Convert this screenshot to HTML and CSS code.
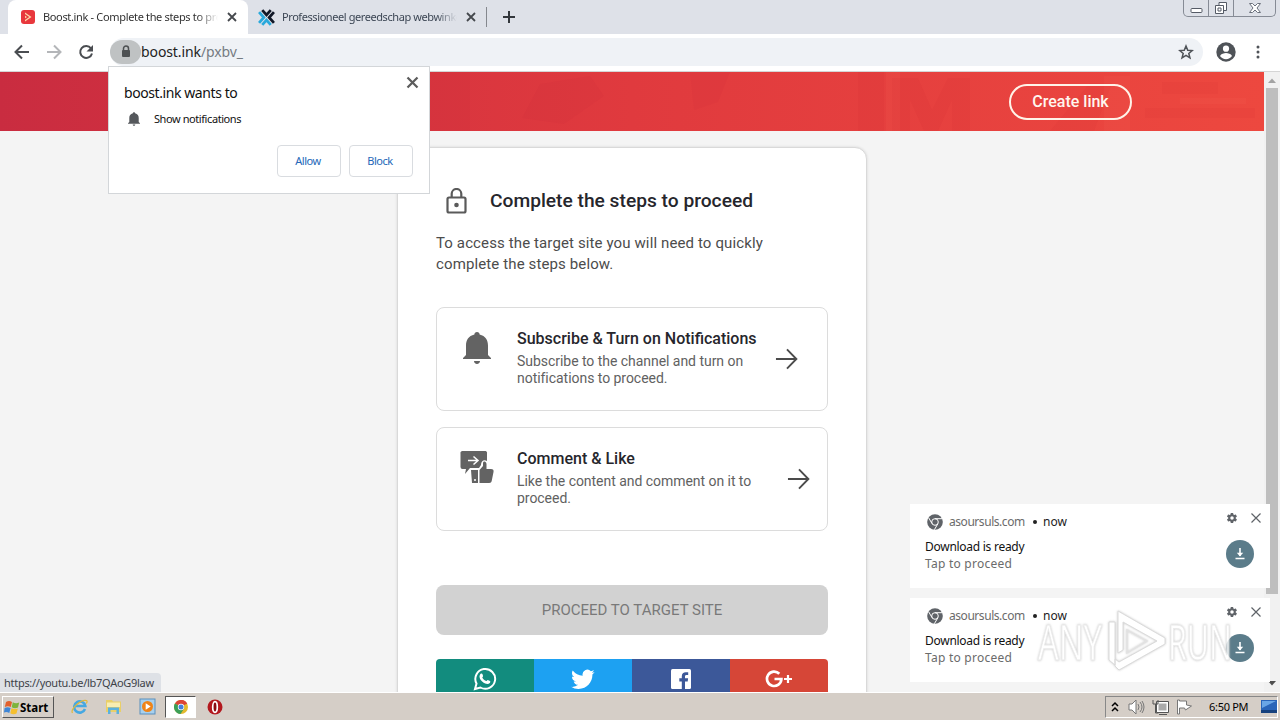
FILE: index.html
```html
<!DOCTYPE html>
<html lang="en">
<head>
    <meta charset="UTF-8">
    <meta name="viewport" content="width=device-width, initial-scale=1.0">
    <title>Boost.ink - Complete the steps to proceed</title>
    <link rel="stylesheet" href="styles.css">
</head>
<body>
    <!-- shared shapes -->
    <svg class="defs" width="0" height="0">
        <symbol id="close" viewBox="0 0 12 12"><path d="M2 2l8 8M10 2l-8 8" fill="none" stroke="currentColor" stroke-width="1.8"/></symbol>
        <symbol id="close-thin" viewBox="0 0 12 12"><path d="M1.500 1.500l9 9M10.500 1.500l-9 9" fill="none" stroke="currentColor" stroke-width="1.200"/></symbol>
        <symbol id="arrow" viewBox="0 0 24 24"><path d="M1 12h21M12.500 2l9.800 10-9.800 10" fill="none" stroke="currentColor" stroke-width="2"/></symbol>
        <symbol id="bell" viewBox="0 0 28 32"><path d="M14 0c1.600 0 2.600 1.100 2.600 2.600C22.500 4 25 8.400 25 13.500V23l3 3v1H0v-1l3-3v-9.500C3 8.400 5.500 4 11.400 2.600 11.400 1.100 12.400 0 14 0zM11 29h6c0 1.600-1.300 3-3 3s-3-1.400-3-3z" fill="currentColor"/></symbol>
        <symbol id="chrome-gray" viewBox="0 0 16 16"><circle cx="8" cy="8" r="7.800" fill="#5f6368"/><circle cx="8" cy="8" r="3.300" fill="none" stroke="#fff" stroke-width="1"/><path d="M8 4.700h7M5.100 9.700L1.700 3.900M10.900 9.700l-3.500 6" stroke="#fff" stroke-width="1"/></symbol>
        <symbol id="gear" viewBox="0 0 24 24"><path fill="#5f6368" fill-rule="evenodd" d="M19.400 13a7.800 7.800 0 0 0 0-2l2.100-1.700a.5.5 0 0 0 .1-.6l-2-3.500a.5.5 0 0 0-.6-.2l-2.500 1a7.500 7.500 0 0 0-1.700-1l-.4-2.600a.5.500 0 0 0-.5-.4h-4a.5.500 0 0 0-.5.4L9 5a7.500 7.500 0 0 0-1.700 1l-2.500-1a.5.500 0 0 0-.6.200l-2 3.500a.5.500 0 0 0 .1.600L4.500 11a7.800 7.800 0 0 0 0 2l-2.200 1.700a.5.500 0 0 0-.1.600l2 3.500c.1.200.4.300.6.200l2.500-1a7.500 7.500 0 0 0 1.700 1l.4 2.600c0 .2.200.4.500.4h4c.3 0 .5-.2.500-.4l.4-2.600a7.500 7.500 0 0 0 1.700-1l2.500 1c.2.100.5 0 .6-.2l2-3.500a.5.500 0 0 0-.1-.6zM12 15.500a3.500 3.500 0 1 1 0-7 3.500 3.500 0 0 1 0 7z"/></symbol>
        <symbol id="download" viewBox="0 0 28 28"><circle cx="14" cy="14" r="14" fill="#5b7c8a"/><path d="M14 8v8M9.500 18.500h9" stroke="#fff" stroke-width="1.600"/><path d="M10.800 12.800h6.400L14 16.500z" fill="#fff"/></symbol>
    </svg>

    <div class="tabs">
        <div class="tab active">
            <svg class="favicon" viewBox="0 0 14 14"><rect width="14" height="14" rx="3" fill="#e8383d"/><path d="M4 2.500L10.500 7 4 11.500z" fill="#fbd9a8"/><path d="M3.500 4.500L7 7 3.500 9.500" fill="none" stroke="#e8383d" stroke-width="1.500"/></svg>
            <span class="tab-title">Boost.ink - Complete the steps to proceed</span>
            <svg class="tab-close"><use href="#close"/></svg>
        </div>
        <div class="tab">
            <svg class="favicon big" viewBox="0 0 16 16"><path d="M4 1l4 4.500L12 1M15 3l-4.500 5 4.500 5" fill="none" stroke="#111827" stroke-width="2.600"/><path d="M1 3l4.500 5L1 13M4 15l4-4.500 4 4.500" fill="none" stroke="#29a9dc" stroke-width="2.600"/></svg>
            <span class="tab-title">Professioneel gereedschap webwinkel</span>
            <svg class="tab-close"><use href="#close"/></svg>
        </div>
        <span class="tab-line"></span>
        <svg class="new-tab" viewBox="0 0 12 12"><path d="M6 0v12M0 6h12" stroke="#33373c" stroke-width="2"/></svg>
        <div class="window-buttons">
            <span><svg width="14" height="17"><rect x="2" y="8.500" width="11" height="4" rx="1" fill="#fff" stroke="#555b66"/></svg></span>
            <span><svg width="14" height="17"><path d="M5 5V2.500h7.500v8H10M1.500 5.500H9.500v8h-8zM4 8h3v3H4z" fill="#fff" stroke="#555b66"/></svg></span>
            <span class="wide"><svg width="14" height="17"><path d="M1.500 3.500h3L7 6l2.500-2.500h3L9 8l3.500 4.500h-3L7 10l-2.500 2.500h-3L5 8z" fill="#fff" stroke="#6b717c"/></svg></span>
        </div>
    </div>

    <div class="toolbar">
        <svg class="nav" viewBox="0 0 16 16"><path d="M15 8H2M8 1.500L1.500 8 8 14.500" fill="none" stroke="#4a4d51" stroke-width="2"/></svg>
        <svg class="nav" viewBox="0 0 16 16"><path d="M1 8h13M8 1.500L14.500 8 8 14.500" fill="none" stroke="#b4b6b9" stroke-width="2"/></svg>
        <svg class="nav" viewBox="0 0 16 16"><path d="M13 4.300A6 6 0 1 0 14 9.500" fill="none" stroke="#4a4d51" stroke-width="2"/><path d="M15 1v6.500H8.500z" fill="#4a4d51"/></svg>
        <div class="omnibox">
            <span class="lock-pill"><svg width="10" height="13" viewBox="0 0 10 13"><path d="M2.500 6V3.500a2.500 2.500 0 0 1 5 0V6" fill="none" stroke="#4d5052" stroke-width="1.500"/><rect x="1" y="5" width="8" height="7" rx="1" fill="#4d5052"/></svg></span>
            <span class="url">boost.ink<i>/pxbv_</i></span>
            <svg class="star" viewBox="0 0 24 24"><path d="M12 3l2.600 6.300 6.800.5-5.200 4.400 1.700 6.600-5.900-3.600-5.900 3.600 1.700-6.600-5.200-4.400 6.800-.5z" fill="none" stroke="#4f5358" stroke-width="2.300"/></svg>
        </div>
        <svg class="avatar" viewBox="0 0 20 20"><circle cx="10" cy="10" r="9.700" fill="#4f5358"/><circle cx="10" cy="6.700" r="3.100" fill="#fff"/><path d="M4 14c1-2.300 4-3 6-3s5 .7 6 3c-1.300 2-3.500 3.200-6 3.200S5.300 16 4 14z" fill="#fff"/></svg>
        <svg class="dots" viewBox="0 0 4 14"><circle cx="2" cy="2" r="1.500"/><circle cx="2" cy="7" r="1.500"/><circle cx="2" cy="12" r="1.500"/></svg>
    </div>

    <div class="viewport">
        <div class="page">
            <header>
                <svg class="pattern" width="1264" height="59">
                    <path d="M690 0h40l-12 30-24 8zM540 12l50-8 14 20-40 28-42-6zM430 0h40v59h-40z" fill="#b81c34" opacity=".05"/>
                    <path d="M858 0h26v59h-26zM892 59V6h26l14 32 16-32h22v53h-18V28l-14 31h-14l-14-31v31zM1050 59l40-48 22 0-18 48zM1162 10h56v12h-56zM1145 36h110v10h-110z" fill="#c5202c" opacity=".07"/>
                    <path d="M886 0h14v59h-14zM1104 4h26v55h-26zM1180 26h66v6h-66z" fill="#ff7a63" opacity=".08"/>
                </svg>
                <button class="create">Create link</button>
            </header>
            <main class="card">
                <div class="heading">
                    <svg width="21" height="26" viewBox="0 0 21 26"><rect x="1.500" y="9.500" width="18" height="15" rx="1.500" fill="none" stroke="#5a5a5a" stroke-width="2.200"/><path d="M5.700 9V5.800a4.800 4.800 0 0 1 9.600 0V9" fill="none" stroke="#5a5a5a" stroke-width="2.200"/><circle cx="10.500" cy="17" r="2.300" fill="#5a5a5a"/></svg>
                    <h1>Complete the steps to proceed</h1>
                </div>
                <p class="intro">To access the target site you will need to quickly<br>complete the steps below.</p>
                <div class="step">
                    <svg class="step-icon" width="28" height="32"><use href="#bell"/></svg>
                    <div class="step-text">
                        <h2>Subscribe &amp; Turn on Notifications</h2>
                        <p>Subscribe to the channel and turn on<br>notifications to proceed.</p>
                    </div>
                    <svg class="arrow"><use href="#arrow"/></svg>
                </div>
                <div class="step comment">
                    <svg class="step-icon" width="34" height="33" viewBox="0 0 34 33">
                        <path d="M2.500 0h22A2 2 0 0 1 27 2.500V10c-3-2-6 0-6 4l-2 3h-9l-5 6 1-5H2.500A2 2 0 0 1 .5 16V2.500A2 2 0 0 1 2.500 0z" fill="#636363"/>
                        <path d="M8 9.500h9M13.500 5.500l4.500 4-4.500 4" fill="none" stroke="#fff" stroke-width="1.500"/>
                        <path d="M11 19h7v13h-6zM19.500 19l3.500-4v-3c0-2.500 3.500-2 3.500 1v5H31c2 0 3 1 2.500 3l-1.800 9c-.3 1.300-1 2-2.500 2h-9.700z" fill="#636363"/>
                        <circle cx="15" cy="29" r="1" fill="#fff"/>
                    </svg>
                    <div class="step-text">
                        <h2>Comment &amp; Like</h2>
                        <p>Like the content and comment on it to<br>proceed.</p>
                    </div>
                    <svg class="arrow"><use href="#arrow"/></svg>
                </div>
                <button class="proceed">PROCEED TO TARGET SITE</button>
                <div class="share">
                    <span class="whatsapp"><svg width="24" height="24" viewBox="0 0 24 24"><path d="M2 22l1.500-5.500A9.900 9.900 0 1 1 7.400 20.500z" fill="none" stroke="#fff" stroke-width="2"/><path d="M8 6.500c.7-.3 1.200 0 1.400.6l.7 1.800c.1.500-.8 1.200-.8 1.500.8 1.700 2.300 3 4 3.700.4.100 1-1.200 1.500-1.100l2.200 1c.5.300.3 1.500-.2 2.100-1.700 1.900-4.800.7-6.500-.5C8.300 14.100 6.700 12.200 6.500 9.800c0-1.300.7-2.900 1.500-3.300z" fill="#fff"/></svg></span>
                    <span class="twitter"><svg width="24" height="24" viewBox="0 0 24 24"><path fill="#fff" d="M23.600 5a9.600 9.600 0 0 1-2.800.8 4.800 4.800 0 0 0 2.100-2.700 9.700 9.700 0 0 1-3 1.200 4.800 4.800 0 0 0-8.200 4.400A13.700 13.700 0 0 1 1.700 3.600a4.800 4.800 0 0 0 1.500 6.500A4.800 4.800 0 0 1 1 9.500a4.800 4.800 0 0 0 3.900 4.800 4.800 4.800 0 0 1-2.200.1 4.800 4.800 0 0 0 4.500 3.400A9.700 9.700 0 0 1 0 19.800a13.700 13.700 0 0 0 7.500 2.200c9 0 14.200-7.600 13.900-14.500A9.800 9.800 0 0 0 23.600 5z"/></svg></span>
                    <span class="facebook"><svg width="20" height="20" viewBox="0 0 20 20"><rect width="20" height="20" rx="1.500" fill="#fff"/><path d="M10.800 20v-7.500H8.300V9.300h2.500V7.200c0-2.700 1.600-4 4-4h2.400v2.900h-1.600c-1.200 0-1.600.6-1.600 1.500v1.700h3.100l-.4 3.200H14V20z" fill="#3c5899"/></svg></span>
                    <span class="google"><svg width="28" height="20" viewBox="0 0 28 20"><path d="M14.300 4.700A7.200 7.200 0 1 0 16.400 10H9.500" fill="none" stroke="#fff" stroke-width="2.700"/><path d="M23 6v8M19 10h8" stroke="#fff" stroke-width="2.200"/></svg></span>
                </div>
            </main>
        </div>
        <div class="scrollbar">
            <svg width="16" height="16"><path d="M4 11l4-4.500 4 4.500z" fill="#a3a3a3"/></svg>
            <span class="thumb"></span>
            <svg width="16" height="16"><path d="M4 5l4 4.500L12 5z" fill="#4f4f4f"/></svg>
        </div>
    </div>

    <div class="taskbar">
        <div class="start">
            <svg width="16" height="15" viewBox="0 0 16 15"><path d="M2 2q3-2 6 0L6.800 7Q4 5.500.8 7z" fill="#e2602d"/><path d="M8.800 2.200q3 2 6.400.3L14 7.500q-3.300 1.500-6.300-.3z" fill="#7db43c"/><path d="M.6 8q3-1.500 6 0l-1.300 5q-3-1.800-5.300-.4z" fill="#3f86d6"/><path d="M7.500 8.300q3 1.500 6.300.2l-1.300 5q-3.300 1.500-6.200-.3z" fill="#f5bf2e"/></svg>
            Start
        </div>
        <div class="launch">
            <svg width="17" height="17" viewBox="0 0 17 17"><path d="M14 11a5.600 5.600 0 1 1 .3-3H4" fill="none" stroke="#45a8e2" stroke-width="2.600"/><path d="M1.500 15C-1 11 10 1 15.500 2.500c1 .5.500 2-.3 3" fill="none" stroke="#dfb83c" stroke-width="1.200"/></svg>
            <svg width="17" height="17" viewBox="0 0 17 17"><path d="M1 2h6l1 1.500h8V14H1z" fill="#e9cf69"/><path d="M2 4.500h13V9H2z" fill="#f8edb1"/><path d="M3 16V9.500h11V16h-2.500v-4h-6v4z" fill="#5bb1de"/></svg>
            <svg width="17" height="17" viewBox="0 0 17 17"><rect x="1" y="1" width="15" height="15" fill="#a7d0ee" stroke="#5b8fbd"/><circle cx="8.500" cy="8.500" r="5.500" fill="#ef8418"/><path d="M6.700 5.300v6.400l5-3.200z" fill="#fff"/></svg>
            <span class="running"><svg width="14" height="14" viewBox="0 0 14 14"><circle cx="7" cy="7" r="7" fill="#e3b92e"/><path d="M7 7L.9 3.500A7 7 0 0 1 13.100 3.500z" fill="#dc4437"/><path d="M7 7L.9 3.500A7 7 0 0 0 6.500 14L10 8.700z" fill="#3c9f58"/><path d="M7 3.800h6.200L13 3.500A7 7 0 0 0 7 0z" fill="#dc4437"/><circle cx="7" cy="7" r="3.200" fill="#fff"/><circle cx="7" cy="7" r="2.500" fill="#447fdd"/></svg></span>
            <svg class="opera" width="16" height="16" viewBox="0 0 16 16"><circle cx="8" cy="8" r="7.500" fill="#b3181e"/><ellipse cx="8" cy="8" rx="2.300" ry="5.300" fill="#8b0c12" stroke="#fff" stroke-width="1.700"/></svg>
        </div>
        <div class="tray">
            <svg width="8" height="12" viewBox="0 0 8 12"><path d="M1 5l3-3 3 3M1 10l3-3 3 3" fill="none" stroke="#000" stroke-width="1.500"/></svg>
            <svg width="17" height="16" viewBox="0 0 17 16"><path d="M1 5h3l4-4v14l-4-4H1z" fill="#fff" stroke="#777"/><path d="M10 5q2 3 0 6M12 3q4 5 0 10M14 2q4 6 0 12" fill="none" stroke="#777"/></svg>
            <svg width="17" height="16" viewBox="0 0 17 16"><path d="M5.500 3.500h10v9h-10z" fill="#aaa" stroke="#fff" stroke-width="2"/><path d="M4.500 2.500h12v11h-12zM7 15.500h8M1 1v4h5V1M3.500 5v9h3" fill="none" stroke="#555"/></svg>
            <svg width="17" height="16" viewBox="0 0 17 16"><path d="M1.500 1v14h2V9h5l1 2 6-4-5-1V2h-7V1z" fill="#fff" stroke="#777"/></svg>
            <time>6:50 PM</time>
            <svg class="desktop" width="16" height="13" viewBox="0 0 16 13"><path d="M0 0h16v12H0z" fill="#2a65b9"/><path d="M1 1h14L1 8z" fill="#6aa6e6"/><path d="M0 10h16v3H0z" fill="#17427e"/></svg>
        </div>
    </div>

    <div class="permission">
        <svg class="dismiss"><use href="#close"/></svg>
        <p class="asks">boost.ink wants to</p>
        <p class="what"><svg width="12" height="14"><use href="#bell"/></svg>Show notifications</p>
        <div class="choices">
            <button>Allow</button>
            <button>Block</button>
        </div>
    </div>

    <div class="status">https://youtu.be/lb7QAoG9law</div>

    <div class="toasts">
        <div class="toast">
            <div class="source"><svg width="16" height="16"><use href="#chrome-gray"/></svg><span>asoursuls.com</span><b></b><em>now</em><svg class="gear"><use href="#gear"/></svg><svg class="x"><use href="#close-thin"/></svg></div>
            <div class="message">
                <p><strong>Download is ready</strong><br>Tap to proceed</p>
                <svg width="28" height="28"><use href="#download"/></svg>
            </div>
        </div>
        <div class="toast">
            <div class="source"><svg width="16" height="16"><use href="#chrome-gray"/></svg><span>asoursuls.com</span><b></b><em>now</em><svg class="gear"><use href="#gear"/></svg><svg class="x"><use href="#close-thin"/></svg></div>
            <div class="message">
                <p><strong>Download is ready</strong><br>Tap to proceed</p>
                <svg width="28" height="28"><use href="#download"/></svg>
            </div>
        </div>
    </div>

    <svg class="watermark" width="200" height="66" viewBox="0 0 200 66">
        <text x="2" y="52" textLength="64" lengthAdjust="spacingAndGlyphs">ANY</text>
        <path d="M73 14v38l6 5V14zM82 3l47 27v6L83 62l-4-4v-7l4 3 38-21-34-19v28l-5 3z" fill="#fff" stroke="#d2d2d2"/>
        <path d="M91 22v23l20-12z" fill="none" stroke="#dcdcdc" stroke-width="1.500"/>
        <text x="132" y="52" textLength="64" lengthAdjust="spacingAndGlyphs">RUN</text>
    </svg>
</body>
</html>
```

FILE: styles.css
```css
* {
    margin: 0;
    padding: 0;
    box-sizing: border-box;
}

body {
    width: 1280px;
    height: 720px;
    display: flex;
    flex-direction: column;
    overflow: hidden;
    position: relative;
    background-color: #f4f4f4;
    font-family: "Noto Sans", sans-serif;
    font-size: 12px;
    color: #222;
}

svg {
    display: block;
    flex-shrink: 0;
}

.defs {
    position: absolute;
}

/* tab strip */
.tabs {
    height: 34px;
    padding-left: 8px;
    display: flex;
    align-items: center;
    background-color: #dee1e8;
}

.tab {
    width: 240px;
    height: 34px;
    padding: 0 10px 0 13px;
    display: flex;
    align-items: center;
    color: #3c4654;
}

.tab.active {
    background-color: #fff;
    border-radius: 8px 8px 0 0;
    color: #333;
}

.tab:not(.active) {
    padding-left: 10px;
    width: 239px;
}

.tab:not(.active) .tab-title {
    width: 177px;
    letter-spacing: -0.42px;
}

.favicon {
    width: 14px;
    height: 14px;
    margin-right: 8px;
}

.favicon.big {
    width: 17px;
    height: 17px;
    margin-right: 7px;
}

.tab-title {
    width: 176px;
    margin: -2px 8px 0 0;
    font-size: 11px;
    letter-spacing: -0.34px;
    white-space: nowrap;
    overflow: hidden;
    -webkit-mask-image: linear-gradient(to right, #000 88%, transparent);
}

.tab-close {
    width: 12px;
    height: 12px;
    color: #45484d;
}

.tab-line {
    width: 1px;
    height: 20px;
    margin-left: -1px;
    background-color: #85888e;
}

.new-tab {
    width: 12px;
    height: 12px;
    margin-left: 16px;
}

.window-buttons {
    height: 17px;
    margin: 0 4px 0 auto;
    align-self: flex-start;
    display: flex;
    border: 1px solid #868b95;
    border-top: none;
    border-radius: 0 0 5px 5px;
}

.window-buttons span {
    width: 25px;
    display: flex;
    justify-content: center;
    border-right: 1px solid #868b95;
}

.window-buttons .wide {
    width: 41px;
    border: none;
}

/* toolbar */
.toolbar {
    height: 38px;
    padding: 0 19px 2px 14px;
    display: flex;
    align-items: center;
    background-color: #fff;
    border-bottom: 1px solid #d5d5d5;
}

.nav {
    width: 16px;
    height: 16px;
    margin-right: 16px;
}

.omnibox {
    width: 1093px;
    height: 28px;
    display: flex;
    align-items: center;
    border-radius: 14px;
    background-color: #eff2f6;
}

.lock-pill {
    width: 31px;
    height: 24px;
    display: flex;
    align-items: center;
    justify-content: center;
    border-radius: 12px;
    background-color: #bfc2c3;
}

.url {
    font-size: 14px;
    letter-spacing: -0.1px;
    color: #222;
}

.url i {
    font-style: normal;
    color: #757b82;
}

.star {
    width: 16px;
    height: 16px;
    margin: 0 9px 0 auto;
}

.avatar {
    width: 20px;
    height: 20px;
    margin-left: 13px;
}

.dots {
    width: 4px;
    height: 14px;
    margin-left: 20px;
    fill: #4f5358;
}

/* visible part of the site */
.viewport {
    height: 620px;
    display: flex;
    overflow: hidden;
}

.page {
    width: 1264px;
    font-family: Roboto, sans-serif;
}

header {
    height: 59px;
    padding-right: 132px;
    display: flex;
    align-items: center;
    justify-content: flex-end;
    position: relative;
    background: linear-gradient(90deg, #c92c40, #e03a3e 50%, #ed483f);
}

.pattern {
    position: absolute;
    left: 0;
    top: 0;
}

.create {
    width: 123px;
    height: 36px;
    position: relative;
    border: 2px solid #fff3e8;
    border-radius: 18px;
    background: none;
    color: #fff6ee;
    font: 500 16px Roboto, sans-serif;
}

.card {
    width: 470px;
    height: 620px;
    margin: 16px 0 0 397px;
    padding: 36px 38px 0;
    border: 1px solid #d9d9d9;
    border-radius: 12px;
    background-color: #fff;
    box-shadow: 0 0 3px rgba(0, 0, 0, 0.12);
}

.heading {
    height: 34px;
    padding-left: 10px;
    display: flex;
    align-items: center;
}

.heading h1 {
    margin: -2px 0 0 23px;
    font-size: 19.2px;
    font-weight: 500;
    color: #26262c;
}

.intro {
    margin-top: 15px;
    font-size: 15px;
    letter-spacing: 0.12px;
    line-height: 21px;
    color: #4c4c4c;
}

.step {
    height: 104px;
    margin-top: 32px;
    padding: 20px 29px 0 26px;
    display: flex;
    border: 1px solid #dcdcdc;
    border-radius: 8px;
}

.comment {
    margin-top: 16px;
    padding: 20px 17px 0 23px;
}

.step-icon {
    margin-top: 4px;
    color: #636363;
}

.comment .step-icon {
    margin-top: 3px;
}

.step-text {
    margin-left: 26px;
    white-space: nowrap;
}

.comment .step-text {
    margin-left: 23px;
}

.step h2 {
    font-size: 16px;
    font-weight: 500;
    line-height: 22px;
    color: #26262c;
}

.step p {
    margin-top: 3px;
    font-size: 14px;
    letter-spacing: -0.04px;
    line-height: 17px;
    color: #616161;
}

.arrow {
    width: 23px;
    height: 24px;
    margin: 19px 0 0 auto;
    color: #4b4b4b;
}

.proceed {
    display: block;
    width: 392px;
    height: 50px;
    margin-top: 54px;
    border: none;
    border-radius: 8px;
    background-color: #d2d2d2;
    color: #797979;
    font: 400 15px Roboto, sans-serif;
}

.share {
    height: 40px;
    margin-top: 24px;
    display: flex;
    overflow: hidden;
    border-radius: 4px;
}

.share span {
    flex: 1;
    display: flex;
    align-items: center;
    justify-content: center;
}

.whatsapp {
    background-color: #128c7e;
}

.twitter {
    background-color: #1da1f2;
}

.facebook {
    background-color: #3c5899;
}

.google {
    background-color: #d64637;
}

.scrollbar {
    width: 16px;
    display: flex;
    flex-direction: column;
    background-color: #f1f1f1;
}

.thumb {
    height: 506px;
    margin: 0 2px auto;
    background-color: #bebebe;
}

/* permission popup */
.permission {
    position: absolute;
    left: 108px;
    top: 66px;
    width: 322px;
    height: 128px;
    padding: 16px 16px 16px 15px;
    border: 1px solid #d3d6d9;
    background-color: #fff;
    color: #111;
}

.dismiss {
    position: absolute;
    right: 9px;
    top: 8px;
    width: 15px;
    height: 15px;
    color: #5c5c5c;
}

.asks {
    font-size: 14px;
    letter-spacing: -0.42px;
    line-height: 20px;
}

.what {
    height: 16px;
    margin: 7px 0 19px 4px;
    display: flex;
    align-items: center;
    font-size: 11px;
    letter-spacing: -0.42px;
}

.what svg {
    margin: 2px 14px 0 0;
    color: #55585c;
}

.choices {
    display: flex;
    justify-content: flex-end;
    gap: 8px;
}

.choices button {
    width: 64px;
    height: 32px;
    padding: 0 2px 2px 0;
    border: 1px solid #d9dce0;
    border-radius: 4px;
    background-color: #fff;
    color: #2467b8;
    font: 11px "Noto Sans", sans-serif;
    letter-spacing: -0.45px;
}

.status {
    position: absolute;
    left: 0;
    top: 673px;
    width: 161px;
    height: 19px;
    padding-left: 4px;
    border-radius: 0 4px 0 0;
    background-color: #dee1e6;
    color: #3d4248;
    font-size: 11px;
    letter-spacing: -0.28px;
    line-height: 19px;
}

/* notifications in the corner */
.toasts {
    position: absolute;
    left: 910px;
    top: 504px;
    width: 360px;
    display: flex;
    flex-direction: column;
    gap: 10px;
}

.toast {
    height: 84px;
    padding: 9px 8px 0 15px;
    background-color: #fff;
    font-size: 12px;
    color: #6b6b6b;
}

.source {
    height: 18px;
    padding-left: 2px;
    display: flex;
    align-items: center;
}

.source span {
    width: 76px;
    margin: -2px 0 0 6px;
    letter-spacing: -0.45px;
}

.source b {
    width: 4px;
    height: 4px;
    margin: 0 6px 0 8px;
    border-radius: 50%;
    background-color: #222;
}

.source em {
    margin-top: -2px;
    font-style: normal;
    color: #222;
}

.gear {
    width: 12px;
    height: 12px;
    margin: -8px 12px 0 auto;
}

.x {
    width: 12px;
    height: 12px;
    margin-top: -8px;
    color: #5f6368;
}

.message {
    margin-top: 7px;
    padding-right: 8px;
    display: flex;
    justify-content: space-between;
    line-height: 17px;
    letter-spacing: 0.24px;
}

.message strong {
    font-weight: 400;
    letter-spacing: -0.27px;
    color: #111;
}

.message svg {
    margin-top: 2px;
}

.watermark {
    position: absolute;
    left: 1036px;
    top: 608px;
    opacity: 0.8;
    font: 49px "Open Sans", sans-serif;
    filter: drop-shadow(0 0 1px #bbb);
}

.watermark text {
    fill: #fff;
    stroke: #e6e6e6;
    stroke-width: 1px;
}

/* windows taskbar */
.taskbar {
    height: 28px;
    padding: 0 2px;
    display: flex;
    align-items: center;
    background-color: #d5cec7;
    border-top: 1px solid #fff;
}

.start {
    width: 52px;
    height: 22px;
    margin-top: 1px;
    padding-left: 1px;
    display: flex;
    align-items: center;
    border: 1px solid;
    border-color: #fff #555 #555 #fff;
    color: #000;
    font: bold 11.5px "Noto Sans", sans-serif;
}

.launch {
    margin-left: 17px;
    display: flex;
    align-items: center;
    gap: 17px;
}

.running {
    width: 31px;
    height: 22px;
    margin: 0 -8px;
    display: flex;
    align-items: center;
    justify-content: center;
    border: 1px solid;
    border-color: #555 #fff #fff #555;
    background-color: #fff;
}

.opera {
    margin-left: 2px;
}

.tray {
    width: 173px;
    height: 22px;
    margin-left: auto;
    padding-left: 5px;
    display: flex;
    align-items: center;
    gap: 7px;
    border: 1px solid;
    border-color: #888 #fff #fff #888;
    color: #000;
    font-size: 11px;
}

.tray svg:nth-child(2) {
    margin-left: 2px;
}

.tray time {
    margin-left: 9px;
    letter-spacing: -0.3px;
    white-space: nowrap;
}

.tray .desktop {
    margin-left: auto;
}
```
